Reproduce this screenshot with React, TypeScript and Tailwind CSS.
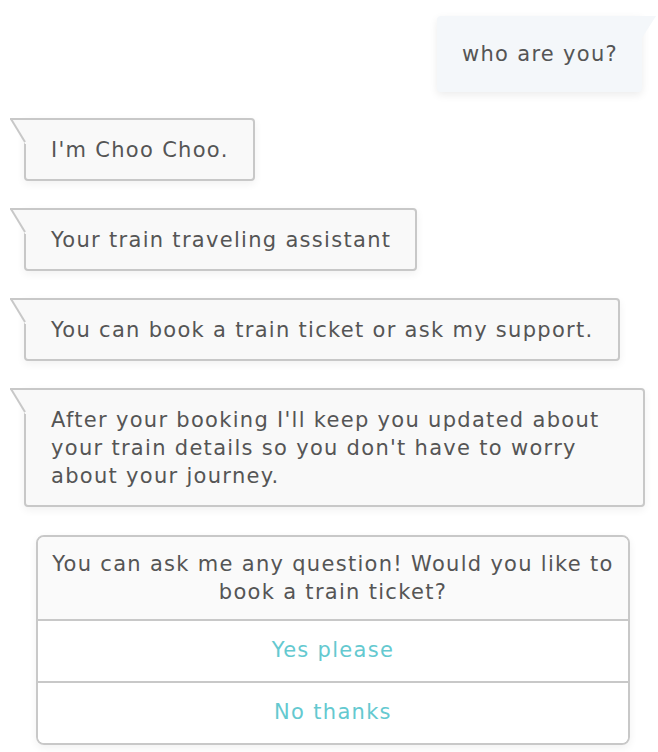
import React from 'react';

const BotTail: React.FC = () => (
  <svg className="absolute -left-4 -top-[2px]" width="16" height="26" viewBox="0 0 16 26">
    <polygon points="0,0 16,0 16,26 15,26" fill="#f9f9f9" />
    <line x1="0" y1="1" x2="16" y2="1" stroke="#c8c8c8" strokeWidth="2" />
    <line x1="1" y1="1" x2="15" y2="24" stroke="#c8c8c8" strokeWidth="2" />
  </svg>
);

const BotBubble: React.FC<{ children: React.ReactNode }> = ({ children }) => (
  <div className="relative ml-[24px] self-start max-w-[621px] rounded-[4px] rounded-tl-none border-2 border-[#c8c8c8] bg-[#f9f9f9] pl-[25px] pr-[24px] py-[15.5px] shadow-[0_3px_8px_rgba(0,0,0,0.06)]">
    <BotTail />
    <p className="text-[21px] leading-[28px] tracking-[1.3px] text-[#555555]">{children}</p>
  </div>
);

export default function App() {
  return (
    <div className="min-h-[752px] w-[658px] bg-white pt-[16px] font-['DejaVu_Sans',sans-serif]">
      <div className="flex flex-col">
        <div className="relative mr-[16px] self-end rounded-[4px] rounded-tr-none bg-[#f4f7fa] pl-[25px] pr-[24px] py-[24px] shadow-[0_3px_8px_rgba(0,0,0,0.08)]">
          <svg className="absolute -right-[14px] top-0" width="14" height="22" viewBox="0 0 14 22">
            <polygon points="0,0 14,0 0,22" fill="#f4f7fa" />
          </svg>
          <p className="text-[21px] leading-[28px] tracking-[1.3px] text-[#555555]">who are you?</p>
        </div>

        <div className="mt-[26px] flex flex-col gap-[27px]">
          <BotBubble>I'm Choo Choo.</BotBubble>
          <BotBubble>Your train traveling assistant</BotBubble>
          <BotBubble>You can book a train ticket or ask my support.</BotBubble>
          <BotBubble>
            After your booking I'll keep you updated about your train details so you don't have to worry about your journey.
          </BotBubble>
        </div>

        <div className="ml-[36px] mt-[28px] w-[594px] overflow-hidden rounded-[8px] border-2 border-[#c8c8c8] shadow-[0_3px_8px_rgba(0,0,0,0.06)]">
          <div className="bg-[#fafafa] px-[8px] py-[13px] text-center text-[21px] leading-[28px] tracking-[1.3px] text-[#555555]">
            You can ask me any question! Would you like to book a train ticket?
          </div>
          <button className="block h-[62px] w-full border-t-2 border-[#c8c8c8] bg-white text-center text-[21px] tracking-[1.3px] text-[#64c9d0]">
            Yes please
          </button>
          <button className="block h-[62px] w-full border-t-2 border-[#c8c8c8] bg-white text-center text-[21px] tracking-[1.3px] text-[#64c9d0]">
            No thanks
          </button>
        </div>
      </div>
    </div>
  );
}
